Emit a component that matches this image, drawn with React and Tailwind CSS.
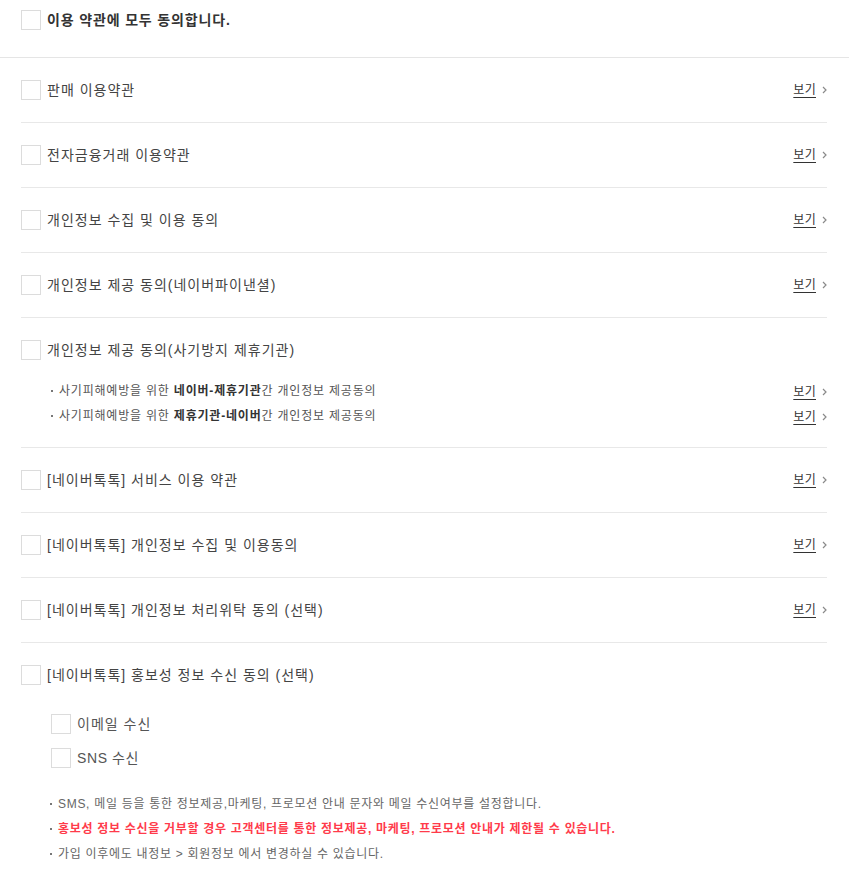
import React from 'react';

const font = { fontFamily: '"Liberation Sans", "Noto Sans CJK KR", sans-serif' };

const Box = ({ className = '' }) => (
  <span className={`block w-5 h-5 shrink-0 border border-[#dcdcdc] bg-white ${className}`} />
);

const View = () => (
  <a className="flex items-center gap-[6px] text-[12px] leading-none text-[#333] tracking-[0.3px] cursor-pointer">
    <span className="underline underline-offset-[3px]">보기</span>
    <svg width="5" height="8" viewBox="0 0 5 8" fill="none">
      <path d="M1 1l3 3-3 3" stroke="#8a8a8a" strokeWidth="1.2" />
    </svg>
  </a>
);

const Dot = () => <span className="inline-block w-[2px] h-[2px] bg-[#777] align-middle mr-[6px] ml-[2px] mb-[2px]" />;

const Row = ({ label, children, view = true }) => (
  <li className="border-b border-[#e8e8e8] pt-[22px] pb-[22px]">
    <div className="flex items-center justify-between">
      <label className="flex items-center gap-[6px]">
        <Box />
        <span className="text-[14px] leading-5 text-[#444] tracking-[1px]">{label}</span>
      </label>
      {view && <View />}
    </div>
    {children}
  </li>
);

const Sub = ({ children }) => (
  <div className="flex items-center justify-between pl-[28px] text-[12px] leading-[25px] text-[#555]">
    <span className="tracking-[0.8px]">
      <Dot />
      {children}
    </span>
    <View />
  </div>
);

export default function App() {
  const rows = [
    '판매 이용약관',
    '전자금융거래 이용약관',
    '개인정보 수집 및 이용 동의',
    '개인정보 제공 동의(네이버파이낸셜)',
  ];
  const rows2 = [
    '[네이버톡톡] 서비스 이용 약관',
    '[네이버톡톡] 개인정보 수집 및 이용동의',
    '[네이버톡톡] 개인정보 처리위탁 동의 (선택)',
  ];
  return (
    <div className="bg-white min-h-screen" style={font}>
      <div className="flex items-center gap-[6px] px-[21px] pt-[10px] pb-[27px] border-b border-[#e5e5e5]">
        <Box />
        <span className="text-[14px] font-bold leading-5 text-[#333] tracking-[0.85px]">이용 약관에 모두 동의합니다.</span>
      </div>
      <ul className="pl-[21px] pr-[22px]">
        {rows.map((r) => (
          <Row key={r} label={r} />
        ))}
        <li className="border-b border-[#e8e8e8] pt-[22px] pb-[18px]">
          <label className="flex items-center gap-[6px]">
            <Box />
            <span className="text-[14px] leading-5 text-[#444] tracking-[1px]">개인정보 제공 동의(사기방지 제휴기관)</span>
          </label>
          <div className="mt-[19px]">
            <Sub>
              사기피해예방을 위한 <b className="text-[#333]">네이버-제휴기관</b>간 개인정보 제공동의
            </Sub>
            <Sub>
              사기피해예방을 위한 <b className="text-[#333]">제휴기관-네이버</b>간 개인정보 제공동의
            </Sub>
          </div>
        </li>
        {rows2.map((r) => (
          <Row key={r} label={r} />
        ))}
        <li className="pt-[22px] pb-[10px]">
          <label className="flex items-center gap-[6px]">
            <Box />
            <span className="text-[14px] leading-5 text-[#444] tracking-[1px]">[네이버톡톡] 홍보성 정보 수신 동의 (선택)</span>
          </label>
          <div className="mt-[29px] pl-[30px] flex flex-col gap-[14px]">
            <label className="flex items-center gap-[6px]">
              <Box />
              <span className="text-[14px] leading-5 text-[#555] tracking-[1px]">이메일 수신</span>
            </label>
            <label className="flex items-center gap-[6px]">
              <Box />
              <span className="text-[14px] leading-5 text-[#555] tracking-[0.6px]">SNS 수신</span>
            </label>
          </div>
          <ul className="mt-[24px] pl-[27px] text-[12px] leading-[25px] text-[#666] tracking-[0.7px]">
            <li>
              <Dot />SMS, 메일 등을 통한 정보제공,마케팅, 프로모션 안내 문자와 메일 수신여부를 설정합니다.
            </li>
            <li className="text-[#ff3b4b] font-bold">
              <Dot />홍보성 정보 수신을 거부할 경우 고객센터를 통한 정보제공, 마케팅, 프로모션 안내가 제한될 수 있습니다.
            </li>
            <li>
              <Dot />가입 이후에도 내정보 &gt; 회원정보 에서 변경하실 수 있습니다.
            </li>
          </ul>
        </li>
      </ul>
    </div>
  );
}
